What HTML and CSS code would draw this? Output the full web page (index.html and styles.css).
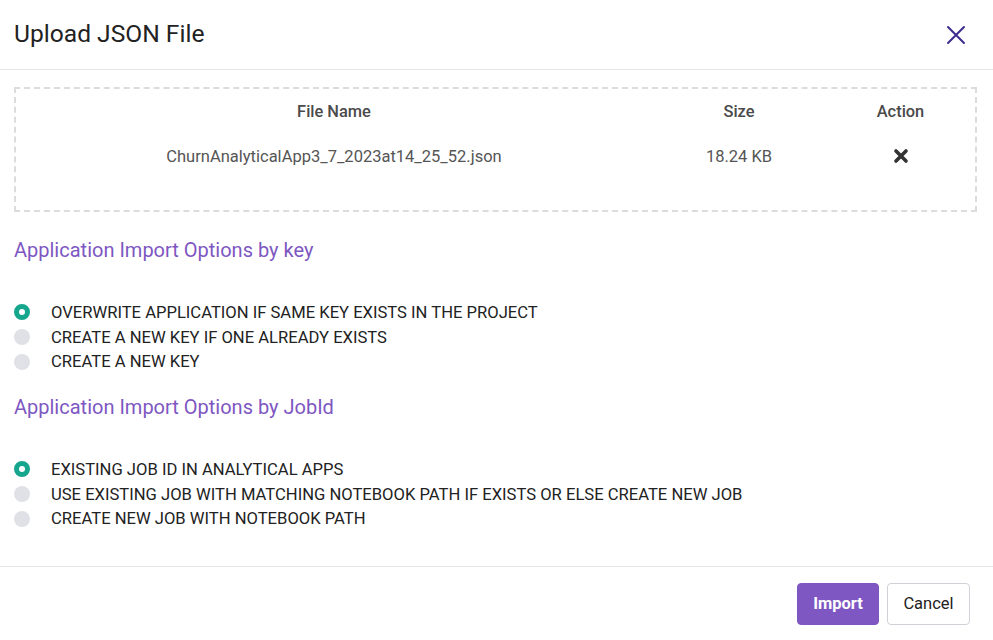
FILE: index.html
```html
<!DOCTYPE html>
<html>
<head>
<meta charset="utf-8">
<link rel="stylesheet" href="styles.css">
</head>
<body>
<div class="modal">
  <div class="modal-header">
    <h1 class="title">Upload JSON File</h1>
    <button class="close" aria-label="Close">
      <svg width="20" height="20" viewBox="0 0 20 20"><path d="M2 2 L18 18 M18 2 L2 18" stroke="#3d2b8e" stroke-width="2" fill="none" stroke-linecap="round"/></svg>
    </button>
  </div>
  <div class="modal-body">
    <div class="dropzone">
      <div class="tbl-row tbl-head">
        <div class="col">File Name</div>
        <div class="col">Size</div>
        <div class="col">Action</div>
      </div>
      <div class="tbl-row tbl-data">
        <div class="col">ChurnAnalyticalApp3_7_2023at14_25_52.json</div>
        <div class="col">18.24 KB</div>
        <div class="col">
          <svg class="del" width="16" height="16" viewBox="0 0 16 16"><path d="M3 3 L13 13 M13 3 L3 13" stroke="#333" stroke-width="3.6" fill="none" stroke-linecap="round"/></svg>
        </div>
      </div>
    </div>

    <h2 class="section">Application Import Options by key</h2>
    <div class="options first">
      <label class="opt"><span class="radio checked"></span>OVERWRITE APPLICATION IF SAME KEY EXISTS IN THE PROJECT</label>
      <label class="opt"><span class="radio"></span>CREATE A NEW KEY IF ONE ALREADY EXISTS</label>
      <label class="opt"><span class="radio"></span>CREATE A NEW KEY</label>
    </div>

    <h2 class="section">Application Import Options by JobId</h2>
    <div class="options">
      <label class="opt"><span class="radio checked"></span>EXISTING JOB ID IN ANALYTICAL APPS</label>
      <label class="opt"><span class="radio"></span>USE EXISTING JOB WITH MATCHING NOTEBOOK PATH IF EXISTS OR ELSE CREATE NEW JOB</label>
      <label class="opt"><span class="radio"></span>CREATE NEW JOB WITH NOTEBOOK PATH</label>
    </div>
  </div>
  <div class="modal-footer">
    <button class="btn btn-primary">Import</button>
    <button class="btn btn-secondary">Cancel</button>
  </div>
</div>
</body>
</html>
```

FILE: styles.css
```css
* { box-sizing: border-box; }
html, body {
  margin: 0;
  padding: 0;
  background: #fff;
  font-family: Roboto, "Liberation Sans", sans-serif;
  color: #222;
}
.modal {
  width: 993px;
  height: 640px;
  display: flex;
  flex-direction: column;
}
.modal-header {
  height: 70px;
  padding: 0 14px;
  display: flex;
  align-items: center;
  justify-content: space-between;
  border-bottom: 1px solid #e6e6e6;
}
.title {
  margin: 0;
  font-size: 24.6px;
  font-weight: 400;
  color: #222;
  line-height: 1;
}
.close {
  background: none;
  border: 0;
  padding: 0;
  margin-right: 13px;
  width: 20px;
  height: 20px;
  display: flex;
}
.modal-body {
  padding: 17px 16px 0 14px;
  flex: 1;
}
.dropzone {
  height: 125px;
  border: 2px dashed #dcdcdc;
  padding-top: 11px;
}
.tbl-row {
  display: grid;
  grid-template-columns: 636px 174px 1fr;
}
.tbl-row .col {
  text-align: center;
  display: flex;
  justify-content: center;
  align-items: center;
}
.tbl-head {
  height: 22px;
  font-size: 16.4px;
  font-weight: 500;
  color: #4a4a4a;
}
.tbl-data {
  margin-top: 23px;
  height: 22px;
  font-size: 16.5px;
  color: #555;
}
.section {
  margin: 26px 0 0 0;
  font-size: 20px;
  font-weight: 400;
  color: #7e57c2;
  line-height: 24px;
}
.options {
  margin-top: 38px;
  display: flex;
  flex-direction: column;
}
.options.first {
  margin-bottom: 21px;
}
.options + .section { margin-top: 0; }
.opt {
  display: flex;
  align-items: center;
  height: 24.7px;
  font-size: 16.6px;
  color: #222;
}
.radio {
  width: 16px;
  height: 16px;
  border-radius: 50%;
  background: #dfe1e6;
  margin-right: 21px;
  flex: none;
}
.radio.checked {
  background: #fff;
  border: 5px solid #16a58d;
}
.modal-footer {
  height: 74px;
  border-top: 1px solid #e6e6e6;
  display: flex;
  justify-content: flex-end;
  align-items: center;
  gap: 8px;
  padding: 0 23px 0 0;
}
.btn {
  height: 42px;
  border-radius: 4px;
  font-family: Roboto, "Liberation Sans", sans-serif;
  font-size: 16.5px;
  padding: 0;
  cursor: pointer;
}
.btn-primary {
  background: #7e57c2;
  border: 1px solid #7e57c2;
  color: #fff;
  font-weight: 700;
  width: 82px;
}
.btn-secondary {
  background: #fff;
  border: 1px solid #cfd2d6;
  color: #222;
  width: 83px;
}
```
